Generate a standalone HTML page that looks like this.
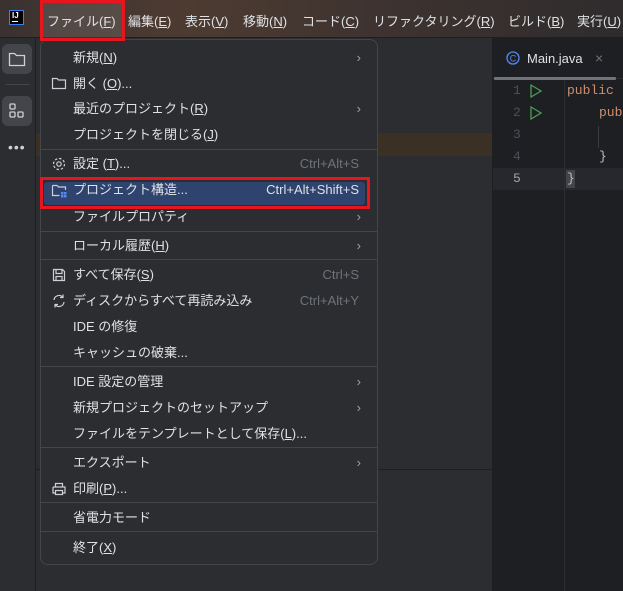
<!DOCTYPE html>
<html><head><meta charset="utf-8"><style>
*{margin:0;padding:0;box-sizing:border-box}
body{width:623px;height:591px;overflow:hidden;background:#2b2d30;font-family:"Liberation Sans","Noto Sans CJK JP",sans-serif;position:relative;color:#dfe1e5;font-size:13px}
.title{position:absolute;left:0;top:0;width:623px;height:38px;background:linear-gradient(90deg,#3a3230 0%,#4d3b31 30%,#3e3330 60%,#2f2c2d 100%);border-bottom:1px solid #1e1f22}
.mi{position:absolute;top:11px;font-size:13px;color:#dfe1e5;white-space:nowrap}
u{text-decoration:underline}
.redbox{position:absolute;border:3px solid #e8141e}
.lt{position:absolute;left:0;top:38px;width:36px;height:553px;background:#2b2d30;border-right:1px solid #1e1f22}
.proj{position:absolute;left:36px;top:38px;width:456px;height:553px;background:#2b2d30}
.ed{position:absolute;left:492px;top:38px;width:131px;height:553px;background:#1e1f22;border-left:1px solid #1e1f22}
.menu{position:absolute;left:40px;top:39px;width:338px;height:526px;background:#2b2d30;border:1px solid #43454a;border-radius:8px}
.it{position:absolute;left:32px;font-size:13px;color:#dfe1e5;white-space:nowrap;line-height:16px}
.sc{position:absolute;right:18px;color:#6f737a;font-size:13px;line-height:16px}
.ar{position:absolute;right:16px;color:#9da0a8;font-size:13px;line-height:16px}
.sep{position:absolute;left:0;right:0;height:1px;background:#43454a}
.ic{position:absolute;left:10px}
.code{position:absolute;font-family:"Liberation Mono",monospace;font-size:13px}
</style></head><body>
<div class="title">
 <div style="position:absolute;left:9px;top:10px;width:15px;height:15px;background:#000;border:1px solid #3d7ff0"><div style="position:absolute;left:2px;top:0px;color:#fff;font-size:8px;font-weight:bold;font-family:'Liberation Sans'">IJ</div><div style="position:absolute;left:2px;bottom:2px;width:6px;height:1px;background:#fff"></div></div>
 <div style="position:absolute;left:41px;top:0;width:83px;height:38px;background:rgba(255,255,255,0.1)"></div>
 <span class="mi" style="left:47px">ファイル(<u>F</u>)</span>
 <span class="mi" style="left:128px">編集(<u>E</u>)</span>
 <span class="mi" style="left:185px">表示(<u>V</u>)</span>
 <span class="mi" style="left:243px">移動(<u>N</u>)</span>
 <span class="mi" style="left:302px">コード(<u>C</u>)</span>
 <span class="mi" style="left:373px">リファクタリング(<u>R</u>)</span>
 <span class="mi" style="left:508px">ビルド(<u>B</u>)</span>
 <span class="mi" style="left:577px">実行(<u>U</u>)</span>
</div>
<div class="lt">
 <div style="position:absolute;left:2px;top:6px;width:30px;height:30px;background:#43454a;border-radius:6px"></div>
 <svg style="position:absolute;left:8px;top:13px" width="18" height="16" viewBox="0 0 18 16"><path d="M1.5 2.5h5l2 2h8v10h-15z" fill="none" stroke="#ced0d6" stroke-width="1.3"/></svg>
 <div style="position:absolute;left:6px;top:46px;width:24px;height:1px;background:#43454a"></div>
 <div style="position:absolute;left:2px;top:58px;width:30px;height:30px;background:#43454a;border-radius:6px"></div>
 <svg style="position:absolute;left:8px;top:64px" width="18" height="18" viewBox="0 0 18 18" fill="none" stroke="#ced0d6" stroke-width="1.3"><rect x="2" y="2" width="5" height="5" rx="1"/><rect x="2" y="10" width="5" height="5" rx="1"/><rect x="10" y="10" width="5" height="5" rx="1"/></svg>
 <div style="position:absolute;left:8px;top:101px;color:#ced0d6;font-size:14px;letter-spacing:1px">•••</div>
</div>
<div class="proj">
 <div style="position:absolute;left:0;top:95px;width:456px;height:23px;background:#3a3124"></div>
 <div style="position:absolute;left:0;top:431px;width:456px;height:1px;background:#1e1f22"></div>
</div>
<div class="ed">
 <svg style="position:absolute;left:13px;top:13px" width="14" height="14"><circle cx="7" cy="7" r="6" fill="none" stroke="#548af7" stroke-width="1.3"/><text x="7" y="10.5" font-size="9" text-anchor="middle" fill="#548af7" font-family="Liberation Sans">C</text></svg>
 <div style="position:absolute;left:34px;top:13px;color:#dfe1e5;font-size:13px">Main.java</div>
 <div style="position:absolute;left:102px;top:12px;color:#6f737a;font-size:14px">×</div>
 <div style="position:absolute;left:0;top:40px;width:131px;height:1px;background:#2b2d30"></div>
 <div style="position:absolute;left:1px;top:39px;width:122px;height:3px;background:#6f737a;border-radius:1px"></div>
 <div style="position:absolute;left:0;top:130px;width:131px;height:22px;background:#26282e"></div>
 <div style="position:absolute;left:71px;top:42px;width:1px;height:511px;background:#2b2d30"></div>
 <div class="code" style="left:20px;top:45px;color:#4b5059">1</div>
 <div class="code" style="left:20px;top:67px;color:#4b5059">2</div>
 <div class="code" style="left:20px;top:89px;color:#4b5059">3</div>
 <div class="code" style="left:20px;top:111px;color:#4b5059">4</div>
 <div class="code" style="left:20px;top:133px;color:#a1a3ab">5</div>
 <svg style="position:absolute;left:36px;top:46px" width="14" height="36"><path d="M2 1l10 6-10 6z M2 23l10 6-10 6z" fill="none" stroke="#499c54" stroke-width="1.3"/></svg>
 <div class="code" style="left:74px;top:45px;color:#cf8e6d">public</div>
 <div class="code" style="left:106px;top:67px;color:#cf8e6d">publ</div>
 <div style="position:absolute;left:105px;top:88px;width:1px;height:22px;background:#393b40"></div>
 <div class="code" style="left:106px;top:111px;color:#bcbec4">}</div>
 <div style="position:absolute;left:73px;top:132px;width:9px;height:18px;background:#43454a"></div>
 <div class="code" style="left:74px;top:133px;color:#bcbec4">}</div>
</div>
<div class="menu">
 <div class="it" style="top:10px">新規(<u>N</u>)</div><div class="ar" style="top:10px">›</div>
 <svg class="ic" style="top:36px" width="16" height="14"><path d="M1.5 2.5h4.5l1.5 1.5h7v8.5h-13z" fill="none" stroke="#ced0d6" stroke-width="1.2"/></svg>
 <div class="it" style="top:36px">開く (<u>O</u>)...</div>
 <div class="it" style="top:61px">最近のプロジェクト(<u>R</u>)</div><div class="ar" style="top:61px">›</div>
 <div class="it" style="top:87px">プロジェクトを閉じる(<u>J</u>)</div>
 <div class="sep" style="top:109px"></div>
 <svg class="ic" style="top:116px" width="16" height="16"><circle cx="8" cy="8" r="2.2" fill="none" stroke="#ced0d6" stroke-width="1.2"/><circle cx="8" cy="8" r="5.5" fill="none" stroke="#ced0d6" stroke-width="1.2" stroke-dasharray="2.5 1.8"/></svg>
 <div class="it" style="top:116px">設定 (<u>T</u>)...</div><div class="sc" style="top:116px">Ctrl+Alt+S</div>
 <div style="position:absolute;left:3px;top:142px;width:321px;height:23px;background:#2e436e;border-radius:3px"></div>
 <svg class="ic" style="top:142px" width="16" height="16"><path d="M1.5 3.5h4.5l1.5 1.5h7v3 M1.5 3.5v10h7" fill="none" stroke="#ced0d6" stroke-width="1.2"/><rect x="10" y="10" width="2.5" height="2.5" fill="#548af7"/><rect x="13" y="10" width="2.5" height="2.5" fill="#548af7"/><rect x="10" y="13" width="2.5" height="2.5" fill="#548af7"/><rect x="13" y="13" width="2.5" height="2.5" fill="#548af7"/></svg>
 <div class="it" style="top:142px">プロジェクト構造...</div><div class="sc" style="top:142px;color:#dfe1e5">Ctrl+Alt+Shift+S</div>
 <div class="it" style="top:169px">ファイルプロパティ</div><div class="ar" style="top:169px">›</div>
 <div class="sep" style="top:191px"></div>
 <div class="it" style="top:198px">ローカル履歴(<u>H</u>)</div><div class="ar" style="top:198px">›</div>
 <div class="sep" style="top:219px"></div>
 <svg class="ic" style="top:227px" width="16" height="16"><path d="M2.5 2.5h9l2 2v9h-11z M5 2.5v4h6v-4 M5 13.5v-4h6v4" fill="none" stroke="#ced0d6" stroke-width="1.2"/></svg>
 <div class="it" style="top:227px">すべて保存(<u>S</u>)</div><div class="sc" style="top:227px">Ctrl+S</div>
 <svg class="ic" style="top:253px" width="16" height="16"><path d="M3 7a5 5 0 0 1 9-2.5 M13 9a5 5 0 0 1-9 2.5 M12 1.5v3h-3 M4 14.5v-3h3" fill="none" stroke="#ced0d6" stroke-width="1.2"/></svg>
 <div class="it" style="top:253px">ディスクからすべて再読み込み</div><div class="sc" style="top:253px">Ctrl+Alt+Y</div>
 <div class="it" style="top:279px">IDE の修復</div>
 <div class="it" style="top:305px">キャッシュの破棄...</div>
 <div class="sep" style="top:326px"></div>
 <div class="it" style="top:334px">IDE 設定の管理</div><div class="ar" style="top:334px">›</div>
 <div class="it" style="top:360px">新規プロジェクトのセットアップ</div><div class="ar" style="top:360px">›</div>
 <div class="it" style="top:386px">ファイルをテンプレートとして保存(<u>L</u>)...</div>
 <div class="sep" style="top:407px"></div>
 <div class="it" style="top:415px">エクスポート</div><div class="ar" style="top:415px">›</div>
 <svg class="ic" style="top:441px" width="16" height="16"><path d="M4.5 6V2.5h7V6 M2 6h12v6h-2.5 M4.5 12H2V6 M4.5 9.5h7v4h-7z" fill="none" stroke="#ced0d6" stroke-width="1.2"/></svg>
 <div class="it" style="top:441px">印刷(<u>P</u>)...</div>
 <div class="sep" style="top:462px"></div>
 <div class="it" style="top:470px">省電力モード</div>
 <div class="sep" style="top:491px"></div>
 <div class="it" style="top:500px">終了(<u>X</u>)</div>
</div>
<div class="redbox" style="left:40px;top:0;width:85px;height:41px"></div>
<div class="redbox" style="left:40px;top:177px;width:330px;height:32px"></div>
</body></html>
